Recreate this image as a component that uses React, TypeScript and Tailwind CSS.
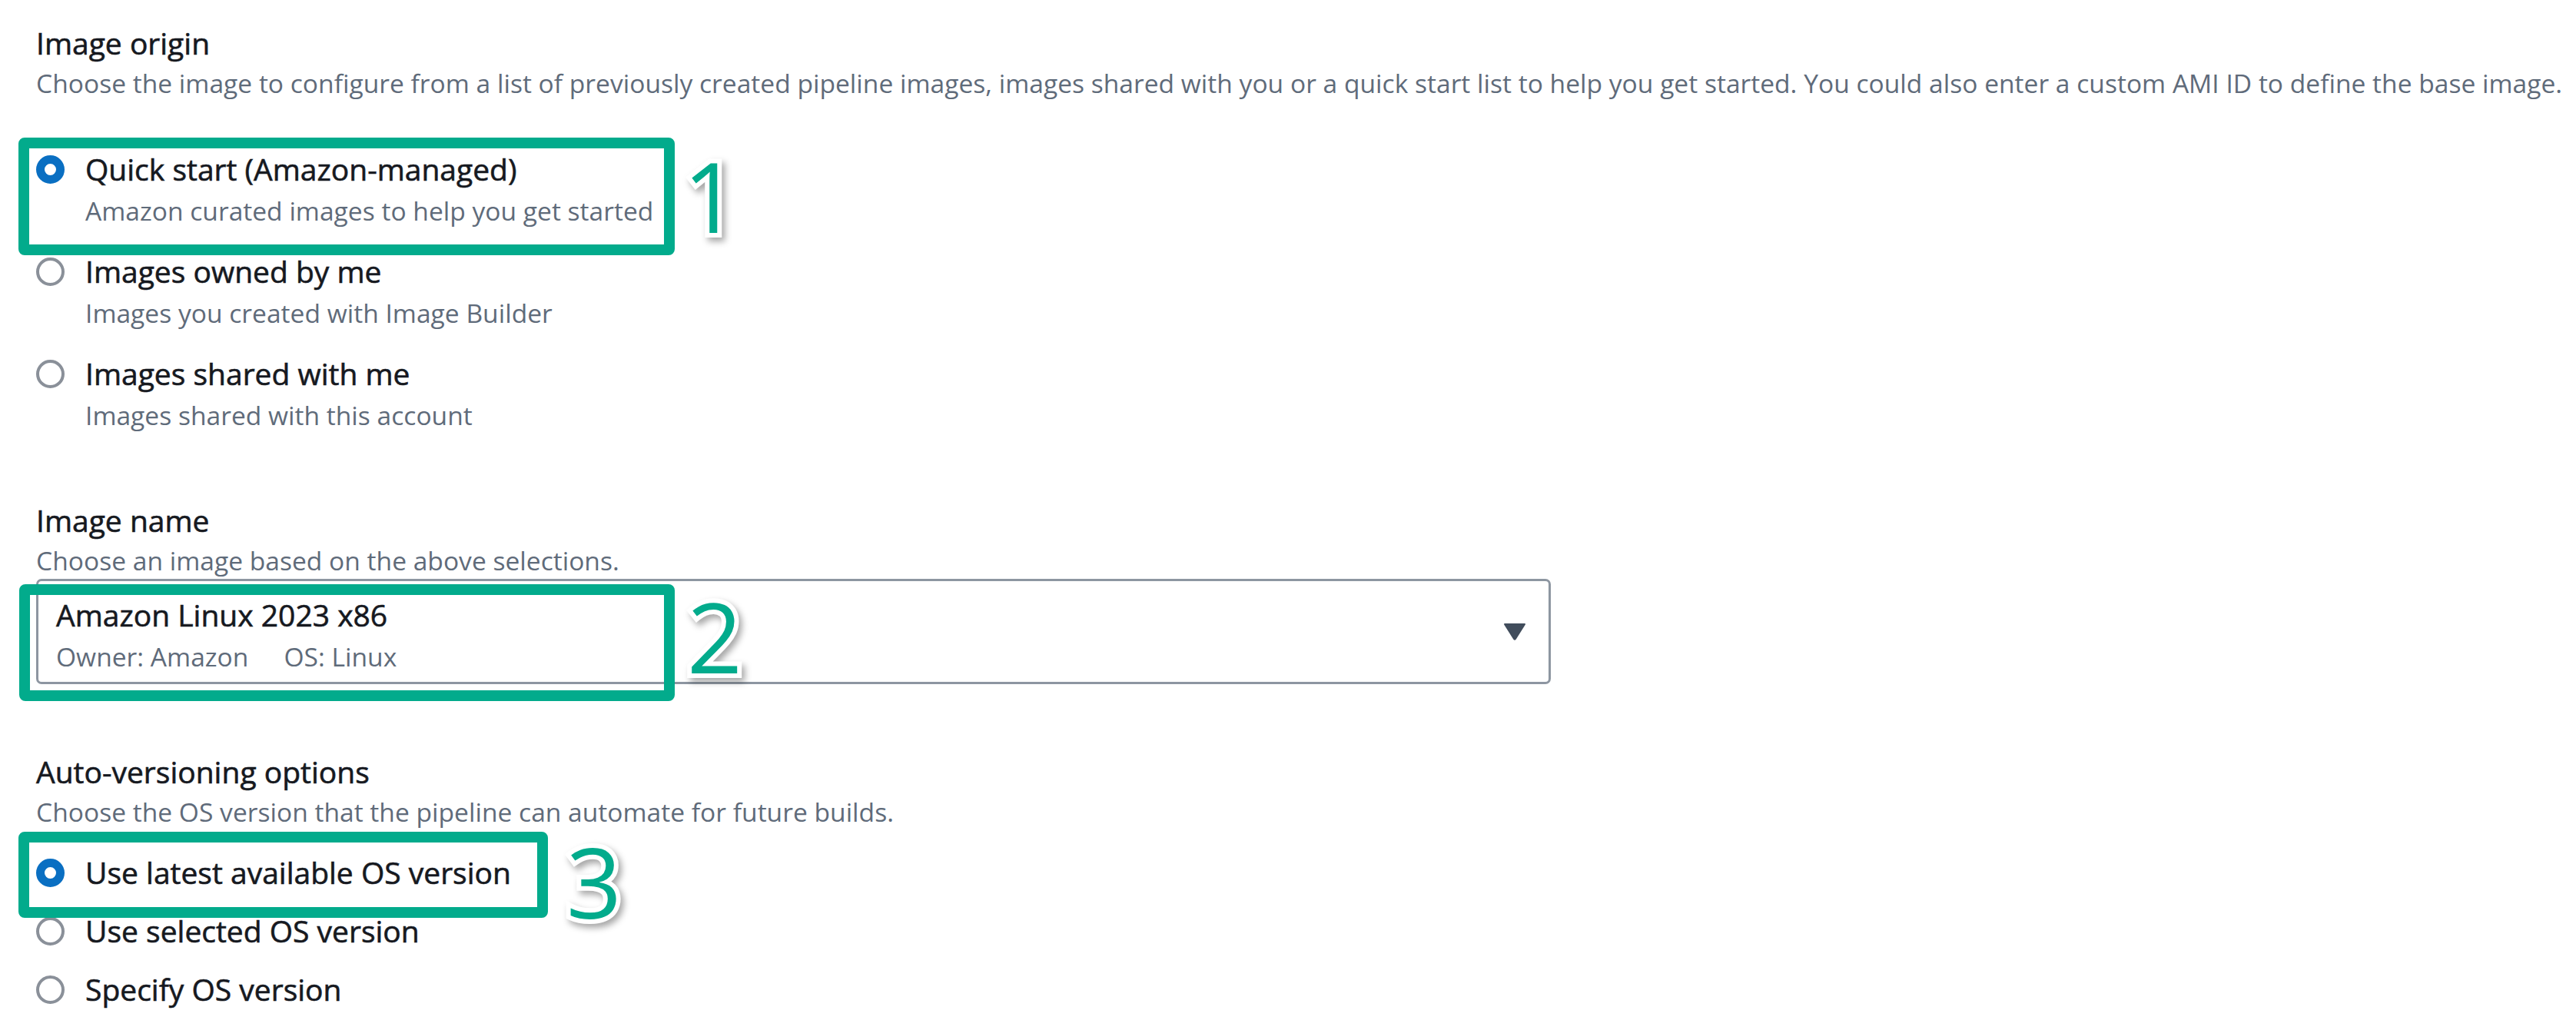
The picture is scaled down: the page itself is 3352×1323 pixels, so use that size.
import React from 'react'

const Radio = ({ checked }: { checked?: boolean }) => (
  <span className="flex h-[48px] shrink-0 items-center">
    {checked ? (
      <span className="size-[37px] rounded-full border-[11px] border-[#0a6fc2] bg-white" />
    ) : (
      <span className="size-[37px] rounded-full border-[4px] border-[#8a9099] bg-white" />
    )}
  </span>
)

const RadioItem = ({ label, desc, checked }: { label: string; desc?: string; checked?: boolean }) => (
  <div className="flex items-start gap-[27px]">
    <Radio checked={checked} />
    <div className="flex flex-col">
      <span className="text-[39px] leading-[48px] [-webkit-text-stroke:0.6px_#16191f]">{label}</span>
      {desc && <span className="mt-[10px] text-[33.6px] leading-[40px] text-[#5f6b7a]">{desc}</span>}
    </div>
  </div>
)

const FieldHeader = ({ label, desc }: { label: string; desc: string }) => (
  <>
    <div className="text-[39px] leading-[48px] [-webkit-text-stroke:0.6px_#16191f]">{label}</div>
    <div className="mt-[8px] whitespace-nowrap text-[33.6px] leading-[40px] text-[#5f6b7a]">{desc}</div>
  </>
)

// green callout number with white outline
const Callout = ({ n, className }: { n: string; className: string }) => (
  <span
    className={
      'absolute w-[100px] text-center text-[126px] leading-[100px] text-[#02ab8c] [-webkit-text-stroke:12px_white] [paint-order:stroke_fill] [filter:drop-shadow(4px_5px_4px_rgba(0,0,0,0.35))] ' +
      className
    }
  >
    {n}
  </span>
)

export default function App() {
  return (
    <div className="relative h-[1323px] w-[3352px] overflow-hidden bg-white pl-[47px] pt-[32px] font-['Open_Sans',sans-serif] text-[#16191f]">
      <FieldHeader
        label="Image origin"
        desc="Choose the image to configure from a list of previously created pipeline images, images shared with you or a quick start list to help you get started. You could also enter a custom AMI ID to define the base image."
      />
      <div className="mt-[68px] flex flex-col gap-[35px]">
        <RadioItem checked label="Quick start (Amazon-managed)" desc="Amazon curated images to help you get started" />
        <RadioItem label="Images owned by me" desc="Images you created with Image Builder" />
        <RadioItem label="Images shared with me" desc="Images shared with this account" />
      </div>

      <div className="mt-[93px]">
        <FieldHeader label="Image name" desc="Choose an image based on the above selections." />
        <div className="mt-[4px] flex h-[137px] w-[1971px] items-center justify-between rounded-[7px] border-[3px] border-[#8d96a1] pl-[23px] pr-[29px]">
          <div className="flex flex-col pt-[7px]">
            <span className="text-[39px] leading-[48px] [-webkit-text-stroke:0.6px_#16191f]">Amazon Linux 2023 x86</span>
            <span className="mt-[10px] flex gap-[46px] text-[33.6px] leading-[40px] text-[#5f6b7a]">
              <span>Owner: Amazon</span>
              <span>OS: Linux</span>
            </span>
          </div>
          <svg width="30" height="24" viewBox="0 0 30 24">
            <path d="M2 2 H28 L16 21 Q15 22.5 14 21 Z" fill="#414d5c" stroke="#414d5c" strokeWidth="2" strokeLinejoin="round" />
          </svg>
        </div>
      </div>

      <div className="mt-[90px]">
        <FieldHeader label="Auto-versioning options" desc="Choose the OS version that the pipeline can automate for future builds." />
        <div className="mt-[35px] flex flex-col gap-[28px]">
          <RadioItem checked label="Use latest available OS version" />
          <RadioItem label="Use selected OS version" />
          <RadioItem label="Specify OS version" />
        </div>
      </div>

      {/* annotation overlays */}
      <div className="absolute left-[24px] top-[179px] h-[153px] w-[854px] rounded-[8px] border-[14px] border-[#02ab8c]" />
      <div className="absolute left-[25px] top-[760px] h-[152px] w-[853px] rounded-[8px] border-[14px] border-[#02ab8c]" />
      <div className="absolute left-[24px] top-[1082px] h-[112px] w-[689px] rounded-[8px] border-[14px] border-[#02ab8c]" />
      <Callout n="1" className="left-[875px] top-[204px]" />
      <Callout n="2" className="left-[880px] top-[777px]" />
      <Callout n="3" className="left-[723px] top-[1096px]" />
    </div>
  )
}
